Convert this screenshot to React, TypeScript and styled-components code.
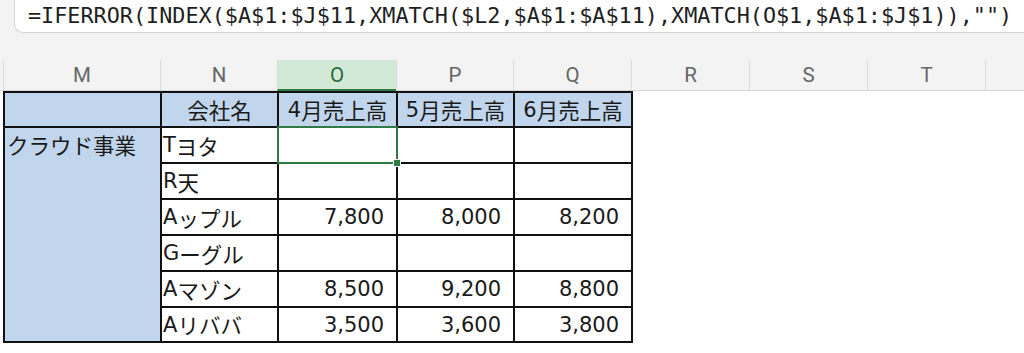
import React from 'react'
import styled, { createGlobalStyle } from 'styled-components'

const GlobalStyle = createGlobalStyle`
  html, body {
    margin: 0;
    padding: 0;
    background: #ffffff;
    overflow: hidden;
  }
`

const green = '#2f7a45'
const blue = '#c1d6ec'

const Page = styled.div`
  width: 1024px;
  height: 353px;
  overflow: hidden;
  background: #ffffff;
`

const TopArea = styled.div`
  background: #f3f3f3;
  height: 60px;
  padding-left: 14px;
  overflow: hidden;
`

const FormulaBox = styled.div`
  margin-top: -10px;
  height: 43px;
  box-sizing: border-box;
  background: #ffffff;
  border: 1px solid #d4d4d4;
  border-right: none;
  border-radius: 0 0 0 9px;
  padding: 12px 0 0 13px;
  font-family: 'DejaVu Sans Mono', 'Liberation Mono', monospace;
  font-size: 21.8px;
  line-height: 26px;
  color: #1f1f1f;
  white-space: nowrap;
`

const HeaderRow = styled.div`
  display: flex;
  height: 31px;
  background: #f3f3f3;
  border-bottom: 1px solid #d6d6d6;
  box-sizing: border-box;
  padding-left: 3px;
`

const ColHead = styled.div<{ $w?: number; $active?: boolean }>`
  ${(p) => (p.$w ? `width: ${p.$w}px; flex: none;` : 'flex: 1;')}
  box-sizing: border-box;
  border-left: 1px solid #dadada;
  display: flex;
  align-items: center;
  justify-content: center;
  font-family: Roboto, 'Liberation Sans', sans-serif;
  font-size: 20.5px;
  color: ${(p) => (p.$active ? '#2a6b3b' : '#666666')};
  background: ${(p) => (p.$active ? '#d3e9d8' : 'transparent')};
  border-bottom: ${(p) => (p.$active ? `2px solid ${green}` : 'none')};
  margin-bottom: ${(p) => (p.$active ? '-1px' : '0')};
  padding-top: ${(p) => (p.$active ? '1px' : '0')};
`

const Sheet = styled.div`
  padding-left: 3px;
`

const Grid = styled.div`
  display: inline-grid;
  grid-template-columns: 155px 115px 117px 115px 116px;
  grid-template-rows: 33px repeat(5, 34px) 33px;
  gap: 2px;
  padding: 2px;
  background: #111111;
`

const Cell = styled.div<{ $head?: boolean; $align?: 'left' | 'center' | 'right'; $selected?: boolean }>`
  position: relative;
  z-index: ${(p) => (p.$selected ? 2 : 'auto')};
  display: flex;
  align-items: center;
  justify-content: ${(p) =>
    p.$align === 'center' ? 'center' : p.$align === 'right' ? 'flex-end' : 'flex-start'};
  padding: ${(p) => (p.$align === 'right' ? '0 12px 0 0' : p.$align === 'center' ? '0' : '0 0 0 1px')};
  background: ${(p) => (p.$head ? blue : '#ffffff')};
  font-family: 'DejaVu Sans', 'Noto Sans CJK JP', sans-serif;
  font-size: 21px;
  color: #1a1a1a;
  white-space: nowrap;
`

const GroupCell = styled.div`
  grid-row: 2 / span 6;
  background: ${blue};
  font-family: 'Noto Sans CJK JP', sans-serif;
  font-size: 21.5px;
  line-height: 33px;
  padding-left: 2px;
  color: #1a1a1a;
  white-space: nowrap;
`

const Selection = styled.div`
  position: absolute;
  inset: -2px;
  border: 2px solid ${green};
  pointer-events: none;
`

const FillHandle = styled.div`
  position: absolute;
  right: -5px;
  bottom: -5px;
  width: 6px;
  height: 6px;
  background: ${green};
  border: 1px solid #ffffff;
`

const Jp = styled.span`
  font-family: 'Noto Sans CJK JP', sans-serif;
  font-size: 21.5px;
`

const columns = [
  { name: 'M', w: 157 },
  { name: 'N', w: 117 },
  { name: 'O', w: 119 },
  { name: 'P', w: 117 },
  { name: 'Q', w: 118 },
  { name: 'R', w: 118 },
  { name: 'S', w: 118 },
  { name: 'T', w: 118 },
]

const rows: { lead: string; name: string; vals: string[] }[] = [
  { lead: 'T', name: 'ヨタ', vals: ['', '', ''] },
  { lead: 'R', name: '天', vals: ['', '', ''] },
  { lead: 'A', name: 'ップル', vals: ['7,800', '8,000', '8,200'] },
  { lead: 'G', name: 'ーグル', vals: ['', '', ''] },
  { lead: 'A', name: 'マゾン', vals: ['8,500', '9,200', '8,800'] },
  { lead: 'A', name: 'リババ', vals: ['3,500', '3,600', '3,800'] },
]

export default function App() {
  return (
    <Page>
      <GlobalStyle />
      <TopArea>
        <FormulaBox>=IFERROR(INDEX($A$1:$J$11,XMATCH($L2,$A$1:$A$11),XMATCH(O$1,$A$1:$J$1)),"")</FormulaBox>
      </TopArea>
      <HeaderRow>
        {columns.map((c) => (
          <ColHead key={c.name} $w={c.w} $active={c.name === 'O'}>
            {c.name}
          </ColHead>
        ))}
        <ColHead />
      </HeaderRow>
      <Sheet>
        <Grid>
          <Cell $head />
          <Cell $head $align="center">
            <Jp>会社名</Jp>
          </Cell>
          {['4', '5', '6'].map((m) => (
            <Cell key={m} $head $align="center">
              {m}
              <Jp>月売上高</Jp>
            </Cell>
          ))}
          <GroupCell>クラウド事業</GroupCell>
          {rows.map((r, i) => (
            <React.Fragment key={i}>
              <Cell>
                {r.lead}
                <Jp>{r.name}</Jp>
              </Cell>
              {r.vals.map((v, j) => {
                const selected = i === 0 && j === 0
                return (
                  <Cell key={j} $align="right" $selected={selected}>
                    {v}
                    {selected && (
                      <Selection>
                        <FillHandle />
                      </Selection>
                    )}
                  </Cell>
                )
              })}
            </React.Fragment>
          ))}
        </Grid>
      </Sheet>
    </Page>
  )
}
